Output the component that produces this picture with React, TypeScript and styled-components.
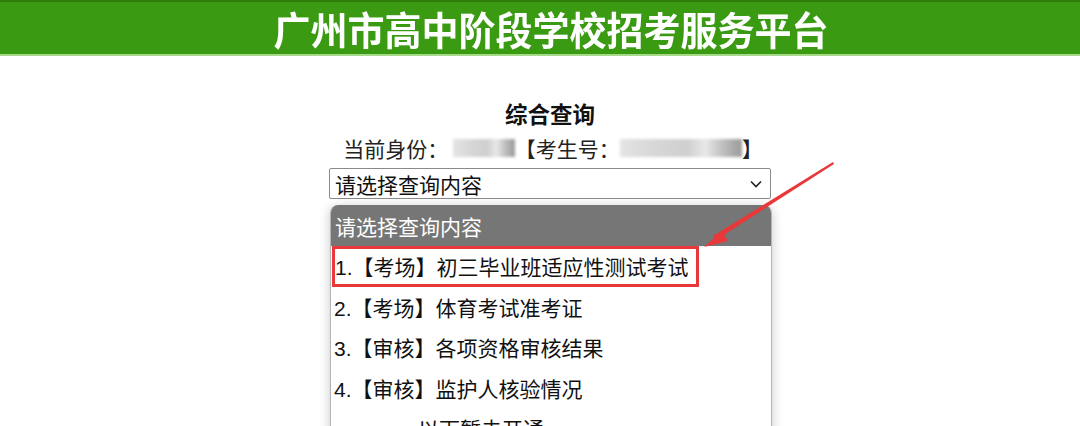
import React from 'react';
import styled, { createGlobalStyle } from 'styled-components';

const GlobalStyle = createGlobalStyle`
  html, body {
    margin: 0;
    padding: 0;
    background: #ffffff;
  }
  body {
    font-family: "Liberation Sans", "Noto Sans CJK SC", sans-serif;
    color: #111;
  }
`;

const options = [
  { label: '1.【考场】初三毕业班适应性测试考试', marked: true },
  { label: '2.【考场】体育考试准考证' },
  { label: '3.【审核】各项资格审核结果' },
  { label: '4.【审核】监护人核验情况' },
  { label: '　　　　以下暂未开通' },
];

const Page = styled.div`
  position: relative;
  width: 1080px;
  height: 426px;
  overflow: hidden;
`;

const Header = styled.header`
  height: 52px;
  background: #3a9b13;
  border-top: 2px solid #2c7d0b;
  border-bottom: 2px solid #a6d98a;
  display: flex;
  align-items: center;
  justify-content: center;
  padding-left: 22px;
`;

const SiteTitle = styled.h1`
  margin: 0;
  font-family: "Noto Sans CJK SC", sans-serif;
  font-weight: 700;
  font-size: 37px;
  letter-spacing: 0;
  color: #ffffff;
  line-height: 44px;
  transform: scaleY(1.04);
`;

const Main = styled.main`
  display: flex;
  flex-direction: column;
  align-items: center;
  padding-left: 20px;
  padding-top: 42px;
`;

const Heading = styled.h2`
  margin: 0;
  font-family: "Noto Sans CJK SC", sans-serif;
  font-size: 22.5px;
  font-weight: 700;
  line-height: 30px;
`;

const Identity = styled.div`
  margin-top: 5px;
  display: flex;
  align-items: center;
  height: 30px;
  font-size: 21px;
  color: #222;
  font-family: "Noto Sans CJK SC", sans-serif;
  margin-left: 6px;
`;

const Blurred = styled.span<{ $w: number }>`
  display: inline-block;
  width: ${p => p.$w}px;
  height: 18px;
  background: linear-gradient(
    90deg,
    #e4e4e4 0%,
    #d6d6d6 30%,
    #cfcfcf 55%,
    #e8e8e8 70%,
    #bdbdbd 85%,
    #9a9a9a 100%
  );
  filter: blur(1.5px);
`;

const SelectWrap = styled.div`
  position: relative;
  margin-top: 5px;
  width: 442px;
`;

const SelectBox = styled.div`
  height: 31px;
  box-sizing: border-box;
  border: 1px solid #8a8a8a;
  border-radius: 2px;
  display: flex;
  align-items: center;
  justify-content: space-between;
  padding: 0 8px 0 5px;
  font-family: "Noto Sans CJK SC", sans-serif;
  font-size: 21px;
  color: #111;
`;

const Dropdown = styled.ul`
  position: absolute;
  top: 37px;
  left: 1px;
  width: 440px;
  margin: 0;
  padding: 0;
  list-style: none;
  background: #fff;
  border: 1px solid #b5b5b5;
  border-top: none;
  border-radius: 8px 8px 0 0;
  box-shadow: 0 2px 12px rgba(0, 0, 0, 0.22);
  overflow: hidden;
  font-family: "Liberation Sans", "Noto Sans CJK SC", sans-serif;
  font-size: 21px;
`;

const Option = styled.li<{ $head?: boolean }>`
  height: ${p => (p.$head ? 41 : 40.5)}px;
  display: flex;
  align-items: center;
  padding-left: ${p => (p.$head ? 4 : 3)}px;
  background: ${p => (p.$head ? '#767676' : '#fff')};
  color: ${p => (p.$head ? '#fff' : '#111')};
  white-space: nowrap;
`;

const Mark = styled.span`
  display: flex;
  align-items: center;
  height: 41px;
  box-sizing: border-box;
  border: 3px solid #e8383a;
  margin-left: -2px;
  padding-right: 7px;
`;

const Overlay = styled.svg`
  position: absolute;
  left: 0;
  top: 0;
  pointer-events: none;
`;

export default function App() {
  return (
    <Page>
      <GlobalStyle />
      <Header>
        <SiteTitle>广州市高中阶段学校招考服务平台</SiteTitle>
      </Header>
      <Main>
        <Heading>综合查询</Heading>
        <Identity>
          <span>当前身份：&nbsp;</span>
          <Blurred $w={62} />
          <span>【考生号：</span>
          <Blurred $w={122} />
          <span>】</span>
        </Identity>
        <SelectWrap>
          <SelectBox>
            <span>请选择查询内容</span>
            <svg width="12" height="8" viewBox="0 0 12 8">
              <polyline points="1,1.5 6,6.5 11,1.5" fill="none" stroke="#222" strokeWidth="1.6" />
            </svg>
          </SelectBox>
          <Dropdown>
            <Option $head>请选择查询内容</Option>
            {options.map(o => (
              <Option key={o.label}>
                {o.marked ? <Mark>{o.label}</Mark> : o.label}
              </Option>
            ))}
          </Dropdown>
        </SelectWrap>
      </Main>
      <Overlay width="1080" height="426" viewBox="0 0 1080 426">
        <polygon points="833,162 834,164 716,240 713,236" fill="#e8383a" />
        <polygon points="704,247 722,231 728,241" fill="#e8383a" />
      </Overlay>
    </Page>
  );
}
